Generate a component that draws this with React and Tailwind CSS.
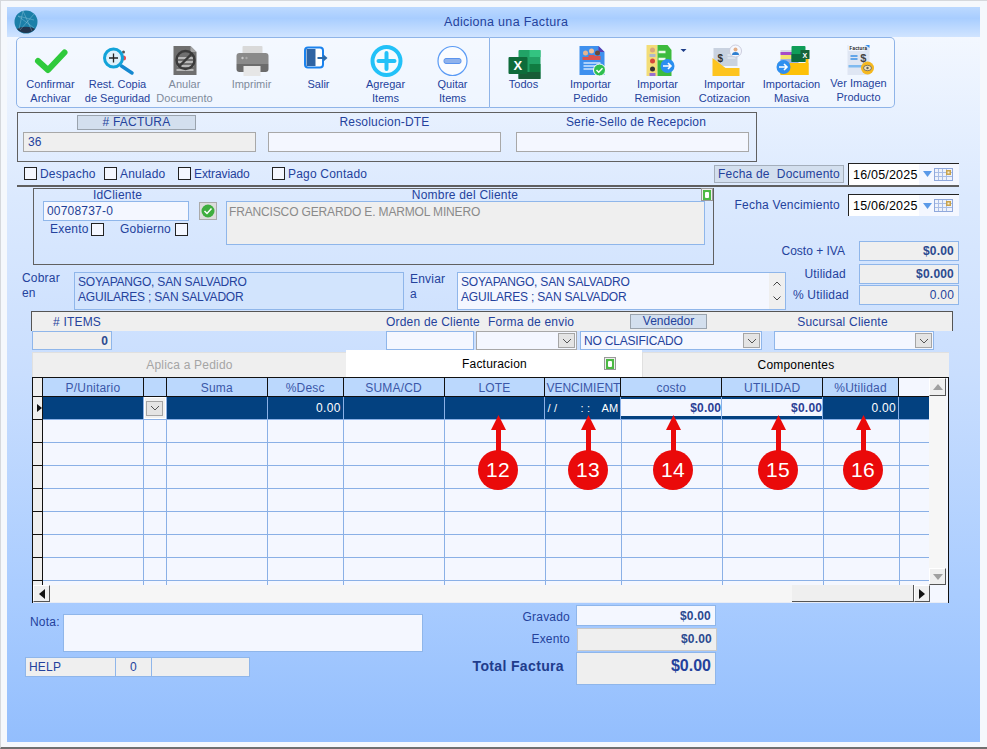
import { Fragment } from 'react';

const navy = 'text-[#24429c]';

// column widths include the right grid line
const COLUMNS = [
  { name: 'P/Unitario', w: 'w-[101px]' },
  { name: '', w: 'w-[23px]' },
  { name: 'Suma', w: 'w-[101px]' },
  { name: '%Desc', w: 'w-[76px]' },
  { name: 'SUMA/CD', w: 'w-[101px]' },
  { name: 'LOTE', w: 'w-[101px]' },
  { name: 'VENCIMIENTO', w: 'w-[76px]' },
  { name: 'costo', w: 'w-[101px]' },
  { name: 'UTILIDAD', w: 'w-[101px]' },
  { name: '%Utilidad', w: 'w-[76px]' },
];

const BADGES = [
  { n: 12, left: 'left-[445px]' },
  { n: 13, left: 'left-[535px]' },
  { n: 14, left: 'left-[620px]' },
  { n: 15, left: 'left-[725px]' },
  { n: 16, left: 'left-[810px]' },
];

function Chevron() {
  return (
    <svg width="10" height="6" viewBox="0 0 10 6" fill="none" stroke="#555" strokeWidth="1">
      <path d="M1 1l4 4 4-4" />
    </svg>
  );
}

function DropBtn({ className = '' }) {
  return (
    <div className={`w-[17px] h-[15px] bg-[#e4e4e4] border border-[#a5a5a5] flex items-center justify-center ${className}`}>
      <Chevron />
    </div>
  );
}

function Check({ label, className = '' }) {
  return (
    <label className={`flex items-center gap-[3px] ${className}`}>
      <span className="w-[13px] h-[13px] border border-[#222] bg-[#f4f7ff]" />
      <span>{label}</span>
    </label>
  );
}

function DateBox({ value }) {
  return (
    <div className="w-[111px] h-[22px] flex border-t border-l border-[#222] bg-[#f4f7ff]">
      <div className="w-[70px] bg-white pl-[4px] text-[12.5px] leading-[22px] text-black tracking-[0.2px]">{value}</div>
      <div className="flex-1 flex items-center pl-[4px] gap-[2px]">
        <svg width="9" height="6" viewBox="0 0 9 6"><path d="M0 0h9L4.500 6z" fill="#5b9ae8" /></svg>
        <svg width="19" height="13" viewBox="0 0 19 13">
          <rect x="0.500" y="0.500" width="18" height="12" fill="#eef2fb" stroke="#8fa8dc" />
          <path d="M4.500 1v11M8.500 1v11M12.500 1v11M1 4.500h17M1 8.500h17" stroke="#a9bde6" strokeWidth="1" />
          <rect x="12" y="2" width="5" height="5" fill="#c8a24c" />
          <rect x="13.500" y="3.500" width="2" height="2" fill="#f5edd4" />
        </svg>
      </div>
    </div>
  );
}

function GreenMini({ className = '' }) {
  return (
    <div className={`w-[12px] h-[13px] bg-[#eee] border border-[#999] flex items-center justify-center ${className}`}>
      <div className="w-[8px] h-[10px] bg-[#4cb944] flex items-center justify-center">
        <div className="w-[4px] h-[6px] bg-white rounded-[1px]" />
      </div>
    </div>
  );
}

function ToolBtn({ label, box, children, dim, shift }) {
  return (
    <div className={`w-[67px] shrink-0 flex flex-col items-center ${dim ? 'text-[#7f8b9c]' : navy}`}>
      {/* drawn in page coordinates, box = left edge of the button */}
      <svg width="67" height="40" viewBox={`${box} 37 67 40`} className="overflow-visible">{children}</svg>
      <div className={`text-[11px] leading-[14px] text-center whitespace-nowrap tracking-normal ${shift ? '-mt-[2px]' : '-mt-px'}`}>
        {label.map(l => <div key={l}>{l}</div>)}
      </div>
    </div>
  );
}

function ArrowBadge({ n, left }) {
  return (
    <div className={`absolute top-[37px] ${left} w-[40px] flex flex-col items-center`}>
      <svg width="15" height="36" viewBox="0 0 15 36" className="-mb-px">
        <path d="M7.500 0L15 15H10V36H5V15H0z" fill="#ea0a0a" />
      </svg>
      <div className="w-[40px] h-[40px] rounded-full bg-[#ea0a0a] text-white text-[21px] flex items-center justify-center">{n}</div>
    </div>
  );
}

function ScrollBtn({ dir, dark, className = '' }) {
  const d = { up: 'M0 6L5 0l5 6z', down: 'M0 0l5 6 5-6z', left: 'M6 0v10L0 5z', right: 'M0 0v10l6-5z' }[dir];
  return (
    <div className={`bg-[#efefef] border-t border-l border-white border-r border-b border-r-[#555] border-b-[#555] flex items-center justify-center ${className}`}>
      <svg width={dir === 'up' || dir === 'down' ? 10 : 6} height={dir === 'up' || dir === 'down' ? 6 : 10} viewBox={dir === 'up' || dir === 'down' ? '0 0 10 6' : '0 0 6 10'}>
        <path d={d} fill={dark ? '#111' : '#a0a0a0'} />
      </svg>
    </div>
  );
}

function Grid() {
  return (
    <div className="relative ml-[25px] w-[917px] h-[226px] border-t border-l border-r border-[#111] bg-[#f4f7ff] flex flex-col">
      <div className="flex h-[207px]">
        <div className="w-[897px] flex flex-col overflow-hidden">
          {/* header */}
          <div className="flex h-[19px] border-b border-[#111] shrink-0">
            <div className="w-[10px] bg-[#efefef] border-r border-[#111]" />
            {COLUMNS.map(c => (
              <div key={c.name} className={`${c.w} bg-[#bbd8fd] border-r border-[#111] ${c.name === 'VENCIMIENTO' ? 'text-left pl-px tracking-normal' : 'text-center tracking-[0.2px]'} text-[12px] leading-[20px] text-[#3a57a8] overflow-hidden whitespace-nowrap`}>{c.name}</div>
            ))}
            <div className="w-[30px]" />
          </div>
          {/* selected row */}
          <div className="flex h-[23px] shrink-0 border-b border-[#8ab0e6] bg-[#034180] text-white text-[12px]">
            <div className="w-[10px] bg-[#efefef] border-r border-b border-[#111] flex items-center justify-end h-[23px]">
              <svg width="5" height="8" viewBox="0 0 5 8"><path d="M0 0l5 4-5 4z" fill="#111" /></svg>
            </div>
            {COLUMNS.map(c => (
              <div key={c.name} className={`${c.w} border-r border-[#8ab0e6] flex items-center justify-end`}>
                {c.name === '' && <div className="w-[22px] h-[22px] bg-[#f0f0f0] border border-white flex items-center justify-center"><DropBtn /></div>}
                {c.name === '%Desc' && <span className="pr-[2px] tracking-[0.3px]">0.00</span>}
                {c.name === 'VENCIMIENTO' && (
                  <div className="w-full flex justify-between px-[2px] text-[11px]">
                    <span>/ /</span>
                    <span className="ml-[12px]">: :</span>
                    <span>AM</span>
                  </div>
                )}
                {(c.name === 'costo' || c.name === 'UTILIDAD') && (
                  <div className="w-full h-[17px] self-start mt-[2px] bg-[#f4f7ff] text-right text-[#2b3f95] font-bold leading-[18px] tracking-[0.2px]">$0.00</div>
                )}
                {c.name === '%Utilidad' && <span className="pr-[2px] tracking-[0.3px]">0.00</span>}
              </div>
            ))}
            <div className="w-[30px]" />
          </div>
          {/* empty rows */}
          {[1, 2, 3, 4, 5, 6, 7, 8].map(r => (
            <div key={r} className={`flex shrink-0 ${r === 8 ? 'h-[4px]' : 'h-[23px] border-b border-[#8ab0e6]'}`}>
              <div className={`w-[10px] bg-[#efefef] border-r border-[#111] ${r === 8 ? '' : 'h-[23px] border-b'}`} />
              {COLUMNS.map(c => (
                <div key={c.name} className={`${c.w} border-r border-[#8ab0e6]`} />
              ))}
            </div>
          ))}
        </div>
        {/* vertical scrollbar */}
        <div className="w-[17px] flex flex-col bg-[#f6f6f6]">
          <ScrollBtn dir="up" className="w-[17px] h-[18px]" />
          <div className="flex-1" />
          <ScrollBtn dir="down" className="w-[17px] h-[17px]" />
        </div>
        <div className="w-[2px]" />
      </div>
      {/* horizontal scrollbar */}
      <div className="flex h-[18px] border-b border-[#e8ecf5]">
        <div className="w-[897px] flex bg-[#f6f6f6]">
          <ScrollBtn dir="left" dark className="w-[17px] h-[17px]" />
          <div className="w-[742px]" />
          <div className="w-[122px] h-[17px] bg-[#efefef] border-b border-r border-[#555]" />
          <ScrollBtn dir="right" dark className="w-[16px] h-[17px]" />
        </div>
      </div>
      {BADGES.map(b => <ArrowBadge key={b.n} n={b.n} left={b.left} />)}
    </div>
  );
}

function LeftToolbar() {
  return (
    <div className="w-[474px] h-[71px] border border-[#8fb4e8] rounded-l-[5px] flex bg-[#f6f9ff]/50">
      <ToolBtn box="17.500" label={['Confirmar', 'Archivar']}>
        <path d="M38.500 60l10 9 16.500-17.500" fill="none" stroke="#2fca3c" strokeWidth="6" strokeLinecap="round" strokeLinejoin="round" />
      </ToolBtn>
      <ToolBtn box="84.500" label={['Rest. Copia', 'de Seguridad']}>
        <circle cx="124" cy="51" r="1.500" fill="#555" />
        <circle cx="124" cy="57" r="2.500" fill="#e84c4c" />
        <path d="M122 65l10.500 7" stroke="#1488d0" strokeWidth="3.500" strokeLinecap="round" />
        <circle cx="114" cy="57" r="9" fill="#dff1fb" stroke="#12a3d9" strokeWidth="3" />
        <path d="M109.500 57h9M114 52.500v9" stroke="#222" strokeWidth="1.300" />
      </ToolBtn>
      <ToolBtn box="151.500" dim label={['Anular', 'Documento']}>
        <path d="M174 45h17l6 6v23h-23z" fill="#6f6f6f" />
        <path d="M191 45l6 6h-6z" fill="#a5a5a5" />
        <path d="M178 57h16M178 61h16M178 65h16M177 69h17" stroke="#cfcfcf" strokeWidth="1.400" />
        <circle cx="186" cy="59" r="9" fill="none" stroke="#3a3a3a" strokeWidth="2.400" />
        <path d="M180 65l12-12" stroke="#3a3a3a" strokeWidth="2.400" />
      </ToolBtn>
      <ToolBtn box="218.500" dim label={['Imprimir']}>
        <rect x="243" y="45" width="20" height="9" rx="1" fill="#d9d9d9" />
        <path d="M237 55a3 3 0 013-3h26a3 3 0 013 3v8h-32z" fill="#8a8a8a" />
        <path d="M237 63h32v5a3 3 0 01-3 3h-26a3 3 0 01-3-3z" fill="#6c6c6c" />
        <circle cx="243" cy="57" r="1.200" fill="#c7c7c7" />
        <circle cx="247" cy="57" r="1.200" fill="#aaa" />
        <rect x="244" y="65" width="17" height="10" fill="#e6e6e6" />
      </ToolBtn>
      <ToolBtn box="285.500" label={['Salir']}>
        <rect x="305.500" y="46.500" width="18" height="20" rx="3" fill="#fff" stroke="#1a82ee" strokeWidth="2" />
        <path d="M307 48h9v17h-9z" fill="#2f64a3" />
        <path d="M318 57h7" stroke="#2d6aa8" strokeWidth="2" />
        <path d="M324 53.500l4 3.500-4 3.500z" fill="#2d6aa8" />
      </ToolBtn>
      <ToolBtn box="352.500" label={['Agregar', 'Items']}>
        <circle cx="387" cy="60" r="14" fill="#f4fbff" stroke="#22c1f8" strokeWidth="4" />
        <path d="M379 60h16M387 52v16" stroke="#22c1f8" strokeWidth="4" strokeLinecap="round" />
      </ToolBtn>
      <ToolBtn box="419.500" label={['Quitar', 'Items']}>
        <circle cx="453" cy="60" r="14.500" fill="#fafcff" stroke="#5b9bf5" strokeWidth="1.200" />
        <rect x="444.500" y="57.500" width="17" height="5" rx="2" fill="#8fb2ec" stroke="#5b94ee" />
      </ToolBtn>
    </div>
  );
}

function RightToolbar() {
  return (
    <div className="w-[405px] h-[71px] border border-l-0 border-[#8fb4e8] rounded-r-[5px] flex bg-[#f6f9ff]/50">
      <ToolBtn box="490.500" label={['Todos']}>
        <rect x="519" y="49" width="22" height="29" rx="1" fill="#21a366" />
        <rect x="530" y="49" width="11" height="7" fill="#33c481" />
        <rect x="530" y="63" width="11" height="8" fill="#107c41" />
        <rect x="519" y="71" width="22" height="7" fill="#185c37" />
        <rect x="509" y="56" width="19" height="17" rx="1" fill="#0e6b3a" />
        <text x="518.500" y="69" textAnchor="middle" fontFamily="Liberation Sans, sans-serif" fontWeight="700" fontSize="13" fill="#fff">X</text>
      </ToolBtn>
      <ToolBtn box="557.500" label={['Importar', 'Pedido']}>
        <path d="M580 45h19l6 6v23h-25z" fill="#3e90ee" />
        <path d="M599 45l6 6h-6z" fill="#5a3fb0" />
        <circle cx="586" cy="52" r="2.500" fill="#e8b48f" />
        <circle cx="592" cy="50" r="2.500" fill="#f0c09a" />
        <circle cx="598" cy="52" r="2.500" fill="#6a4a3a" />
        <path d="M583 59v-3h6v3zM589 59v-5h6v5zM595 59v-4h6v4z" fill="#d9534f" />
        <path d="M584 62h17M584 65h17M584 68h11" stroke="#cfe5ff" strokeWidth="1.300" />
        <circle cx="600" cy="69" r="6" fill="#2fbf4f" stroke="#fff" strokeWidth="1" />
        <path d="M597 69l2.200 2.200 3.800-4" fill="none" stroke="#fff" strokeWidth="1.500" />
      </ToolBtn>
      <ToolBtn box="624.500" label={['Importar', 'Remision']}>
        <rect x="647" y="44" width="11" height="31" fill="#f3dd78" />
        <path d="M658 44h10l4 5v26h-14z" fill="#3dbb3d" />
        <circle cx="653" cy="49" r="2.500" fill="#d8a77d" />
        <path d="M650 56h6v-3h-6z" fill="#b0b8c8" />
        <circle cx="653" cy="60" r="2.500" fill="#d5483c" />
        <circle cx="653" cy="68" r="2.500" fill="#333" />
        <path d="M650 75v-3h6v3z" fill="#9a6fd0" />
        <path d="M659 51h7M659 58h7" stroke="#e9f9e6" strokeWidth="2.500" />
        <circle cx="668" cy="65" r="7" fill="#2b8ff0" />
        <path d="M663.500 65h8M668.500 62l3 3-3 3" fill="none" stroke="#fff" strokeWidth="1.600" />
        <path d="M681 48h6l-3 3z" fill="#1d3d88" />
      </ToolBtn>
      <ToolBtn box="691.500" label={['Importar', 'Cotizacion']}>
        <rect x="714" y="47" width="24" height="18" fill="#c9d2e0" />
        <path d="M728 54h8M728 57h8" stroke="#f0f3fa" strokeWidth="1.200" />
        <text x="721" y="61" textAnchor="middle" fontFamily="Liberation Sans, sans-serif" fontWeight="700" fontSize="10" fill="#333">$</text>
        <path d="M713 57l13 10h14v8h-27z" fill="#fdc41f" />
        <circle cx="736" cy="50" r="6" fill="#f5f8ff" stroke="#ccd" strokeWidth="1" />
        <circle cx="736" cy="48.500" r="2" fill="#e2ad86" />
        <path d="M732.500 54a3.500 3 0 017 0z" fill="#2f7fd0" />
      </ToolBtn>
      <ToolBtn box="758.500" label={['Importacion', 'Masiva']}>
        <rect x="781" y="49" width="18" height="4" fill="#d6d9e6" />
        <rect x="781" y="51" width="18" height="3" fill="#a64bc8" />
        <rect x="781" y="54" width="18" height="4" fill="#f3e36d" />
        <rect x="781" y="58" width="18" height="4" fill="#9fb4df" />
        <path d="M778 62h31v12h-28z" fill="#fdc108" />
        <path d="M806 58h3v16h-3z" fill="#fdc108" />
        <rect x="792" y="45" width="14" height="16" rx="1" fill="#0f9d58" />
        <rect x="792" y="53" width="14" height="8" fill="#0b6b3d" />
        <rect x="801" y="49" width="9" height="9" fill="#17633a" />
        <text x="805.500" y="56.500" textAnchor="middle" fontFamily="Liberation Sans, sans-serif" fontWeight="700" fontSize="7" fill="#fff">X</text>
        <circle cx="784" cy="66" r="7" fill="#2f8ff0" />
        <path d="M779.500 66h8M784.500 63l3 3-3 3" fill="none" stroke="#fff" strokeWidth="1.600" />
      </ToolBtn>
      <ToolBtn box="825.500" shift label={['Ver Imagen', 'Producto']}>
        <rect x="848" y="44" width="22" height="30" fill="#dfe6f3" />
        <rect x="849" y="44" width="16" height="6" fill="#f4f7ff" />
        <text x="850" y="48.500" fontFamily="Liberation Sans, sans-serif" fontWeight="700" fontSize="4.500" fill="#222">Factura</text>
        <path d="M866 44h4l-0 3z" fill="#2f8ff0" />
        <path d="M851 55h7M851 58h7" stroke="#3c91e6" strokeWidth="1.600" />
        <text x="864" y="61" textAnchor="middle" fontFamily="Liberation Sans, sans-serif" fontWeight="700" fontSize="11" fill="#444">$</text>
        <rect x="849" y="64" width="15" height="2.500" fill="#7fbaf0" />
        <circle cx="868" cy="67" r="6.500" fill="#f5b81f" />
        <ellipse cx="868" cy="67" rx="4" ry="2.700" fill="#f3e3b5" stroke="#5e5e5e" strokeWidth="0.800" />
        <circle cx="868" cy="67" r="1.200" fill="#5e5e5e" />
      </ToolBtn>
    </div>
  );
}

export default function App() {
  return (
    <div className={`w-[987px] h-[749px] overflow-hidden bg-[#f5f8fc] border-t border-l border-[#d5d8dc] border-b-2 border-b-[#707070] pt-[6px] pl-[6px] text-[12px] ${navy} font-['Liberation_Sans',Arial,sans-serif] tracking-[0.2px]`}>
      <div className="w-[973px] h-[735px] bg-[linear-gradient(180deg,#f7faff_0%,#dbe9fe_26%,#c9defe_50%,#a9ccff_80%,#93befd_100%)]">
        {/* title bar */}
        <div className="h-[30px] flex items-center bg-[linear-gradient(180deg,#bcd9ff_0%,#a8cdff_38%,#abcfff_42%,#d0e4ff_100%)]">
          <svg width="24" height="24" viewBox="0 0 24 24" className="ml-[7px] shrink-0">
            <circle cx="12" cy="12" r="11.500" fill="#1b7fa8" />
            <path d="M3 19a12 12 0 0018 0c-4-3-14-3-18 0z" fill="#22364f" />
            <path d="M4 6l16 4M9 1l-4 18M9 1l9 20M4 6l16 12M20 4L6 20" stroke="#bfe3f2" strokeWidth="0.500" strokeOpacity="0.600" fill="none" />
          </svg>
          <div className="ml-[406px] text-[12.5px] tracking-[0.3px] whitespace-nowrap">Adiciona una Factura</div>
        </div>

        {/* toolbars */}
        <div className="ml-[9px] flex">
          <LeftToolbar />
          <RightToolbar />
        </div>

        {/* invoice numbers */}
        <div className="ml-[10px] mt-[4px] w-[740px] h-[50px] border border-[#606060] flex pl-[5px] gap-[12px]">
          <div className="w-[233px]">
            <div className="ml-[54px] mt-[2px] w-[119px] h-[15px] bg-[#d3dfee] border border-[#9aa3ad] text-center leading-[13px]">
              # FACTURA
            </div>
            <div className="mt-[2px] h-[20px] bg-[#efefef] border border-[#a8a8a8] pl-[4px] leading-[19px]">36</div>
          </div>
          <div className="w-[233px]">
            <div className="mt-[2px] h-[15px] text-center leading-[15px]">Resolucion-DTE</div>
            <div className="mt-[2px] h-[20px] bg-[#f4f7ff] border border-[#a8a8a8]" />
          </div>
          <div className="ml-[3px] w-[233px]">
            <div className="mt-[2px] h-[15px] pl-[7px] text-center leading-[15px]">Serie-Sello de Recepcion</div>
            <div className="mt-[2px] h-[20px] bg-[#f4f7ff] border border-[#a8a8a8]" />
          </div>
        </div>

        {/* flags and document date */}
        <div className="h-[23px] flex items-center ml-[17px]">
          <Check label="Despacho" className="w-[80px]" />
          <Check label="Anulado" className="w-[74px]" />
          <Check label="Extraviado" className="w-[94px] tracking-[-0.1px]" />
          <Check label="Pago Contado" className="w-[442px]" />
          <div className="w-[130px] h-[18px] bg-[#d3dfee] border border-[#a4aebb] text-center leading-[16px] whitespace-nowrap mr-[4px]">Fecha de&nbsp; Documento</div>
          <DateBox value="16/05/2025" />
        </div>
        <div className="ml-[10px] w-[942px] h-[2px] bg-[#5f5f5f]" />

        {/* client */}
        <div className="flex">
          <div className="relative ml-[26px] mt-px -mb-px w-[681px] h-[77px] border border-[#606060] flex shrink-0">
            <div className="ml-[9px] w-[146px]">
              <div className="text-center leading-[13px] h-[12px] pl-[3px]">IdCliente</div>
              <div className="h-[20px] bg-[#f4f7ff] border border-[#8fb6ea] pl-[3px] leading-[19px] text-[#1e3f96] tracking-[0.2px]">00708737-0</div>
              <div className="mt-[2px] flex items-center leading-[13px]">
                <span className="ml-[7px] w-[41px]">Exento</span>
                <span className="w-[13px] h-[13px] border border-[#222] bg-[#f4f7ff]" />
                <span className="ml-[16px] w-[55px]">Gobierno</span>
                <span className="w-[13px] h-[13px] border border-[#222] bg-[#f4f7ff]" />
              </div>
            </div>
            <div className="ml-[10px] mt-[13px] w-[18px] h-[18px] bg-[#ddd] border border-[#aaa] flex items-center justify-center">
              <svg width="14" height="14" viewBox="0 0 14 14">
                <circle cx="7" cy="7" r="6.500" fill="#3fae3f" />
                <path d="M3.500 7l2.500 2.500 4.500-5" fill="none" stroke="#fff" strokeWidth="1.500" />
              </svg>
            </div>
            <div className="ml-[9px] w-[479px]">
              <div className="text-center leading-[13px] h-[12px] ml-[-1px]">Nombre del Cliente</div>
              <div className="h-[44px] bg-[#efefef] border border-[#8fb6ea] pl-[2px] pt-[3px] leading-[15px] text-[#8a8a8a] tracking-[-0.15px]">FRANCISCO GERARDO E. MARMOL MINERO</div>
            </div>
            <GreenMini className="absolute -top-px right-0" />
          </div>
          <div className="w-[245px] flex flex-col items-end">
            <div className="mt-[7px] flex items-center">
              <span className="mr-[8px]">Fecha Vencimiento</span>
              <DateBox value="15/06/2025" />
            </div>
            <div className="mt-[25px] flex items-center">
              <span className="mr-[14px] tracking-normal">Costo + IVA</span>
              <div className="w-[100px] h-[20px] bg-[#efefef] border border-[#8fb6ea] text-right pr-[4px] leading-[19px] font-bold text-[#2b4a8f]">$0.00</div>
            </div>
          </div>
        </div>

        {/* addresses */}
        <div className="flex h-[46px]">
          <div className="ml-[15px] w-[52px] mt-[7px] leading-[15px]">Cobrar<br />en</div>
          <div className="mt-[8px] w-[330px] h-[38px] bg-[#d2e4fd] border border-[#8fb6ea] pl-[3px] pt-[2px] leading-[15px] tracking-[-0.2px]">
            SOYAPANGO, SAN SALVADRO<br />AGUILARES ; SAN SALVADOR
          </div>
          <div className="ml-[6px] w-[47px] mt-[8px] leading-[15px]">Enviar<br />a</div>
          <div className="mt-[8px] w-[329px] h-[38px] bg-[#f4f7ff] border border-[#8fb6ea] pl-[3px] pt-[2px] leading-[15px] flex tracking-[-0.2px]">
            <div className="w-[308px]">SOYAPANGO, SAN SALVADRO<br />AGUILARES ; SAN SALVADOR</div>
            <div className="w-[16px] -mt-[2px] h-[36px] bg-[#efefef] flex flex-col items-center justify-between py-[8px]">
              <svg width="8" height="5" viewBox="0 0 8 5" fill="none" stroke="#444"><path d="M.5 4.500L4 1l3.500 3.500" /></svg>
              <svg width="8" height="5" viewBox="0 0 8 5" fill="none" stroke="#444"><path d="M.5.500L4 4 7.500.5" /></svg>
            </div>
          </div>
          <div className="w-[173px] flex flex-col items-end">
            <div className="flex items-center">
              <span className="mr-[13px]">Utilidad</span>
              <div className="w-[100px] h-[20px] bg-[#efefef] border border-[#8fb6ea] text-right pr-[4px] leading-[19px] font-bold text-[#2b4a8f]">$0.000</div>
            </div>
            <div className="mt-px flex items-center">
              <span className="mr-[10px]">% Utilidad</span>
              <div className="w-[100px] h-[20px] bg-[#efefef] border border-[#8fb6ea] text-right pr-[4px] leading-[19px]">0.00</div>
            </div>
          </div>
        </div>

        {/* order header */}
        <div className="ml-[24px] mt-[1px] w-[922px] h-[20px] bg-[#efefef] border-t border-l border-r border-[#555] flex items-center whitespace-nowrap">
          <span className="w-[354px] pl-[21px]">
            # ITEMS
          </span>
          <span className="w-[102px]">Orden de Cliente</span>
          <span className="w-[142px]">Forma de envio</span>
          <span className="w-[77px] h-[15px] bg-[#d3dfee] border border-[#9aa3ad] text-center leading-[13px] tracking-normal">Vendedor</span>
          <span className="w-[245px] pl-[26px] text-center">Sucursal Cliente</span>
        </div>
        <div className="ml-[25px] h-[19px] flex">
          <div className="w-[80px] bg-[#efefef] border border-[#8fb6ea] text-right pr-[3px] leading-[18px] font-bold text-[#2b4a8f]">0</div>
          <div className="w-[274px]" />
          <div className="w-[88px] bg-[#f4f7ff] border border-[#8fb6ea]" />
          <div className="ml-[2px] w-[101px] bg-[#f4f7ff] border border-[#a8a8a8] flex justify-end items-center pr-px"><DropBtn /></div>
          <div className="ml-[3px] w-[182px] bg-[#f4f7ff] border border-[#8fb6ea] flex items-center justify-between pl-[3px] pr-px">
            <span className="tracking-[-0.2px]">NO CLASIFICADO</span>
            <DropBtn />
          </div>
          <div className="ml-[12px] w-[160px] bg-[#f4f7ff] border border-[#8fb6ea] flex justify-end items-center pr-px"><DropBtn /></div>
        </div>

        {/* tabs */}
        <div className="ml-[25px] h-[27px] flex items-end">
          <div className="w-[314px] h-[25px] bg-[#efefef] border-t border-l border-[#e0e0e0] text-center leading-[24px] text-[#a5a5a5]">Aplica a Pedido</div>
          <div className="w-[296px] h-[27px] bg-white flex items-center text-black">
            <span className="ml-[116px] w-[142px]">Facturacion</span>
            <GreenMini />
          </div>
          <div className="w-[307px] h-[25px] bg-[#efefef] border-t border-l border-[#e0e0e0] text-center leading-[24px] text-black">Componentes</div>
        </div>

        <Grid />

        {/* notes and totals */}
        <div className="ml-[18px] flex">
          <div className="w-[445px]">
            <div className="mt-[11px] flex">
              <span className="ml-[5px] w-[33px] leading-[15px] mt-px">Nota:</span>
              <div className="w-[360px] h-[38px] bg-[#f4f7ff] border border-[#8fb6ea]" />
            </div>
            <div className="mt-[5px] flex h-[20px]">
              <div className="w-[91px] bg-[#efefef] border border-[#8fb6ea] pl-[3px] leading-[19px]">HELP</div>
              <div className="w-[36px] bg-[#efefef] border-y border-r border-[#8fb6ea] text-center leading-[19px]">0</div>
              <div className="w-[98px] bg-[#efefef] border-y border-r border-[#8fb6ea]" />
            </div>
          </div>
          <div className="w-[247px]">
            <div className="mt-[2px] flex h-[21px] items-center">
              <span className="w-[100px] text-right mt-[3px]">Gravado</span>
              <div className="ml-[6px] w-[140px] h-[21px] bg-[#f4f7ff] border border-[#8fb6ea] text-right pr-[4px] leading-[20px] font-bold text-[#2b4a8f]">$0.00</div>
            </div>
            <div className="mt-[2px] flex h-[23px] items-center">
              <span className="w-[100px] text-right -mt-[2px]">Exento</span>
              <div className="ml-[7px] w-[140px] h-[23px] bg-[#efefef] border border-[#c9c9c9] text-right pr-[4px] leading-[21px] font-bold text-[#2b4a8f]">$0.00</div>
            </div>
            <div className="mt-px flex h-[33px]">
              <span className="w-[94px] text-[14px] font-bold text-[#1f3c8c] leading-[28px] tracking-[0.35px] whitespace-nowrap text-right">Total Factura</span>
              <div className="ml-[12px] w-[140px] bg-[#efefef] border border-[#8fb6ea] text-right pr-[4px] text-[16px] font-bold text-[#24429c] tracking-normal leading-[26px]">$0.00</div>
            </div>
          </div>
        </div>
      </div>
    </div>
  );
}
